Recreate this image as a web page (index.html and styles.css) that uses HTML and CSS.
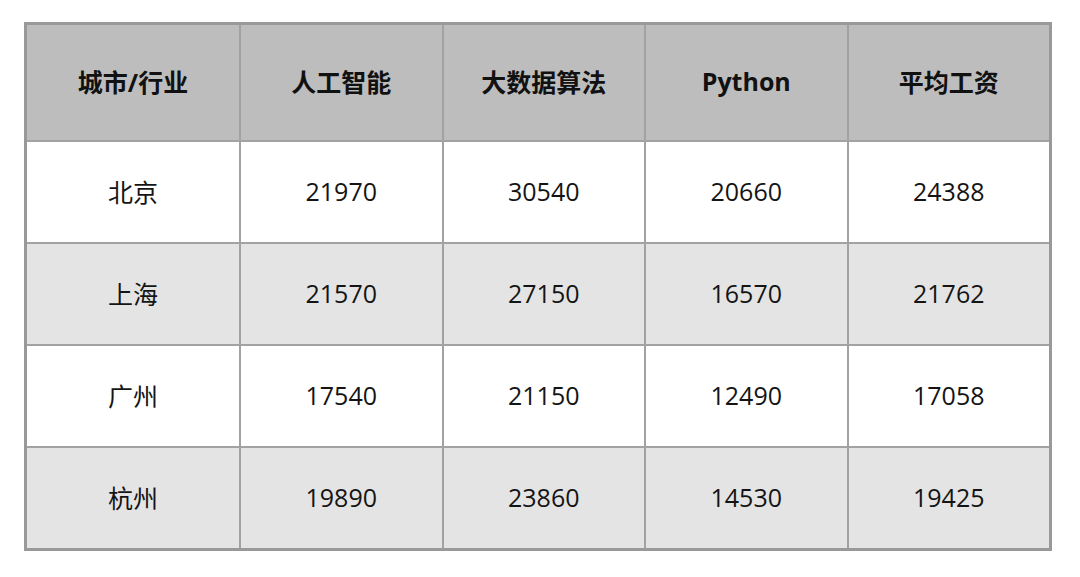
FILE: index.html
```html
<!DOCTYPE html>
<html lang="zh">
<head>
<meta charset="utf-8">
<title>城市行业薪资</title>
<link rel="stylesheet" href="styles.css">
</head>
<body>
<div class="table">
  <div class="cell head">城市/行业</div>
  <div class="cell head">人工智能</div>
  <div class="cell head">大数据算法</div>
  <div class="cell head">Python</div>
  <div class="cell head">平均工资</div>

  <div class="cell">北京</div>
  <div class="cell">21970</div>
  <div class="cell">30540</div>
  <div class="cell">20660</div>
  <div class="cell">24388</div>

  <div class="cell alt">上海</div>
  <div class="cell alt">21570</div>
  <div class="cell alt">27150</div>
  <div class="cell alt">16570</div>
  <div class="cell alt">21762</div>

  <div class="cell">广州</div>
  <div class="cell">17540</div>
  <div class="cell">21150</div>
  <div class="cell">12490</div>
  <div class="cell">17058</div>

  <div class="cell alt">杭州</div>
  <div class="cell alt">19890</div>
  <div class="cell alt">23860</div>
  <div class="cell alt">14530</div>
  <div class="cell alt">19425</div>
</div>
</body>
</html>
```
FILE: styles.css
```css
html, body {
  margin: 0;
  padding: 0;
  background: #ffffff;
}
body {
  font-family: "Open Sans", "Noto Sans CJK SC", "Noto Sans", sans-serif;
  color: #141414;
}
.table {
  margin: 22px 0 0 24px;
  width: 1028px;
  box-sizing: border-box;
  border: 3px solid #999999;
  background: #a2a2a2;
  display: grid;
  grid-template-columns: 212px repeat(4, 1fr);
  grid-template-rows: 115px repeat(4, 100px);
  gap: 2px;
}
.cell {
  background: #ffffff;
  display: flex;
  align-items: center;
  justify-content: center;
  font-size: 25px;
  font-weight: 400;
  padding-bottom: 2px;
}
.cell.alt {
  background: #e4e4e4;
}
.cell.head {
  background: #bdbdbd;
  font-weight: 700;
  font-size: 25px;
  color: #111111;
  padding-bottom: 4px;
}
```
